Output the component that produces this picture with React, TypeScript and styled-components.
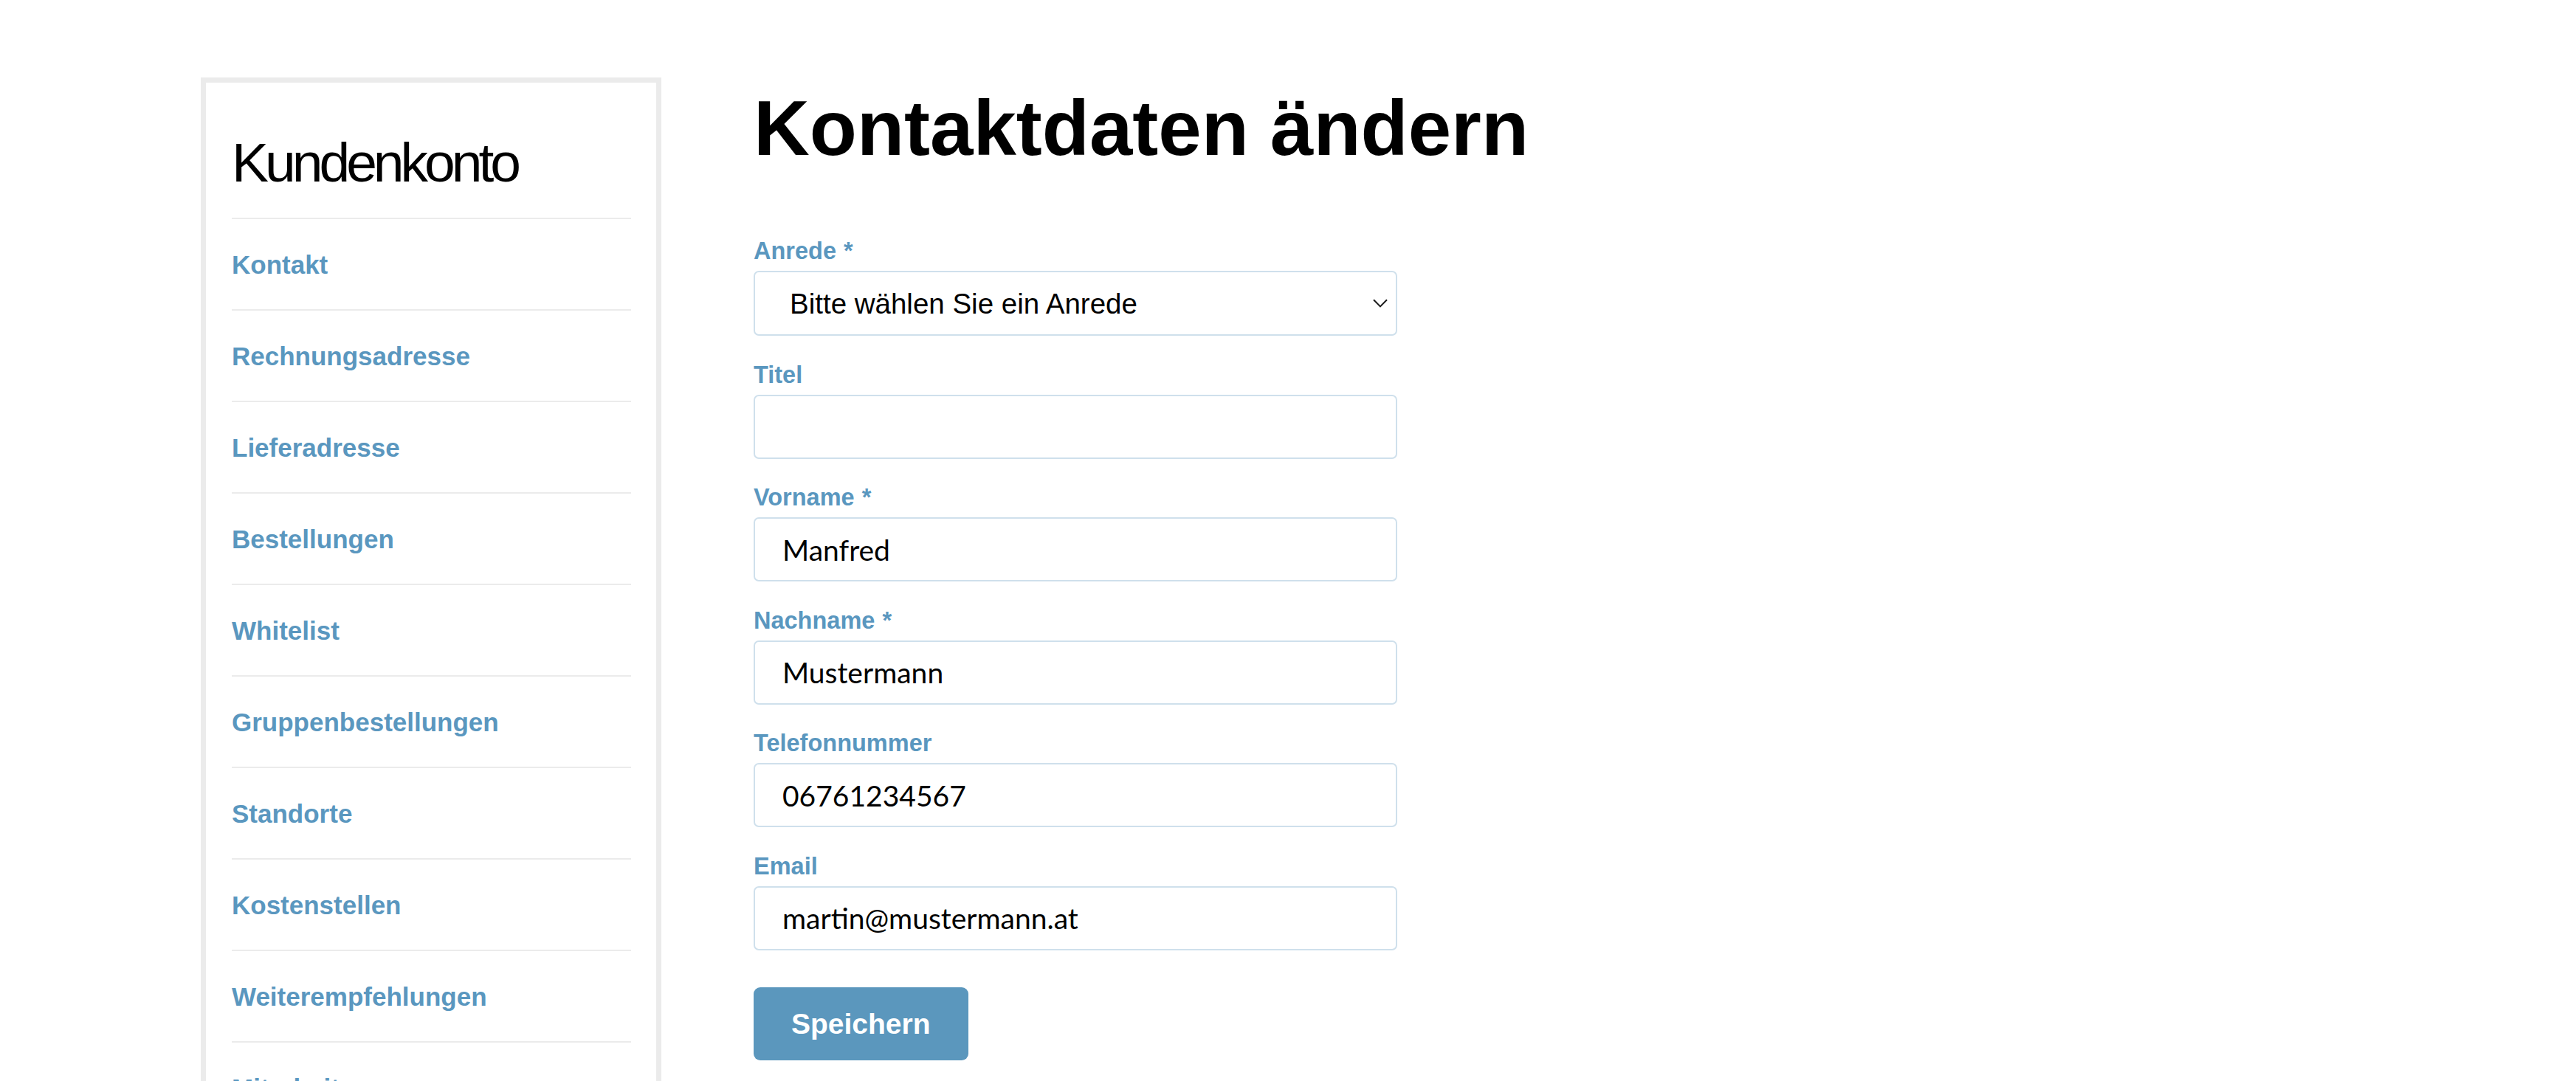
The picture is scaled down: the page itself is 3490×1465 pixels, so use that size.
import React from "react";
import styled, { createGlobalStyle } from "styled-components";

const GlobalStyle = createGlobalStyle`
  html, body {
    margin: 0;
    padding: 0;
    background: #ffffff;
    font-family: "Liberation Sans", Arial, sans-serif;
    color: #000;
  }
  * { box-sizing: border-box; }
`;

const BLUE = "#5a97bf";
const LINE = "#ebebeb";
const FIELD_BORDER = "#cfe0ec";

const Page = styled.div`
  display: flex;
  align-items: flex-start;
  gap: 125px;
  padding: 105px 0 0 272px;
  height: 1465px;
  overflow: hidden;
`;

const Sidebar = styled.aside`
  flex: 0 0 624px;
  width: 624px;
  border: 7px solid ${LINE};
  padding: 63px 34px 40px 35px;
`;

const SideTitle = styled.h2`
  margin: 0;
  font-family: "Liberation Sans", Arial, sans-serif;
  font-weight: 400;
  font-size: 75px;
  line-height: 90px;
  letter-spacing: -5px;
  padding-bottom: 30px;
  border-bottom: 2px solid ${LINE};
`;

const NavList = styled.ul`
  list-style: none;
  margin: 0;
  padding: 0;
`;

const NavItem = styled.li`
  border-bottom: 2px solid ${LINE};
`;

const NavLink = styled.a`
  display: block;
  padding: 40px 0 39px;
  font-size: 35px;
  line-height: 43px;
  font-weight: 700;
  color: ${BLUE};
  text-decoration: none;
`;

const Main = styled.main`
  flex: 0 0 auto;
  width: 1100px;
  padding-top: 5px;
`;

const Heading = styled.h1`
  margin: 0 0 85px;
  font-size: 105px;
  line-height: 127px;
  font-weight: 700;
  white-space: nowrap;
`;

const Form = styled.form`
  width: 872px;
  display: flex;
  flex-direction: column;
`;

const Field = styled.div`
  display: flex;
  flex-direction: column;
  margin-bottom: 34.5px;
`;

const Label = styled.label`
  font-size: 32.5px;
  line-height: 37px;
  font-weight: 700;
  color: ${BLUE};
  margin-bottom: 8px;
`;

const Required = styled.span`
  margin-left: 10px;
`;

const TextInput = styled.input`
  width: 100%;
  height: 87px;
  border: 2px solid ${FIELD_BORDER};
  border-radius: 7px;
  padding: 0 37px;
  font-family: Lato, "Liberation Sans", sans-serif;
  font-size: 39px;
  color: #000;
  background: #fff;
  outline: none;
`;

const SelectWrap = styled.div`
  position: relative;
  width: 100%;
`;

const Select = styled.select`
  appearance: none;
  -webkit-appearance: none;
  width: 100%;
  height: 88px;
  border: 2px solid ${FIELD_BORDER};
  border-radius: 7px;
  padding: 0 60px 0 47px;
  font-family: "Liberation Sans", Arial, sans-serif;
  font-size: 38.5px;
  color: #000;
  background: #fff;
  outline: none;
`;

const Chevron = styled.svg`
  position: absolute;
  right: 13px;
  top: 50%;
  width: 20px;
  height: 12px;
  margin-top: -6px;
  pointer-events: none;
`;

const SubmitButton = styled.button`
  align-self: flex-start;
  margin-top: 16px;
  height: 99px;
  padding: 0 51px;
  border: none;
  border-radius: 9px;
  background: #5b97bd;
  color: #fff;
  font-family: "Liberation Sans", Arial, sans-serif;
  font-weight: 700;
  font-size: 39px;
  cursor: pointer;
`;

const navItems = [
  "Kontakt",
  "Rechnungsadresse",
  "Lieferadresse",
  "Bestellungen",
  "Whitelist",
  "Gruppenbestellungen",
  "Standorte",
  "Kostenstellen",
  "Weiterempfehlungen",
  "Mitarbeiter",
];

const textFields: { label: string; value: string; required?: boolean }[] = [
  { label: "Titel", value: "" },
  { label: "Vorname", value: "Manfred", required: true },
  { label: "Nachname", value: "Mustermann", required: true },
  { label: "Telefonnummer", value: "06761234567" },
  { label: "Email", value: "martin@mustermann.at" },
];

export default function App() {
  return (
    <>
      <GlobalStyle />
      <Page>
        <Sidebar>
          <SideTitle>Kundenkonto</SideTitle>
          <NavList>
            {navItems.map((item) => (
              <NavItem key={item}>
                <NavLink href="#">{item}</NavLink>
              </NavItem>
            ))}
          </NavList>
        </Sidebar>
        <Main>
          <Heading>Kontaktdaten ändern</Heading>
          <Form onSubmit={(e) => e.preventDefault()}>
            <Field>
              <Label htmlFor="anrede">
                Anrede<Required>*</Required>
              </Label>
              <SelectWrap>
                <Select id="anrede" defaultValue="">
                  <option value="">Bitte wählen Sie ein Anrede</option>
                  <option value="herr">Herr</option>
                  <option value="frau">Frau</option>
                </Select>
                <Chevron viewBox="0 0 20 12" fill="none">
                  <path d="M1 1.2 L10 10.4 L19 1.2" stroke="#1a1a1a" strokeWidth="2" />
                </Chevron>
              </SelectWrap>
            </Field>
            {textFields.map((f) => (
              <Field key={f.label}>
                <Label htmlFor={f.label}>
                  {f.label}
                  {f.required && <Required>*</Required>}
                </Label>
                <TextInput id={f.label} defaultValue={f.value} />
              </Field>
            ))}
            <SubmitButton type="submit">Speichern</SubmitButton>
          </Form>
        </Main>
      </Page>
    </>
  );
}
